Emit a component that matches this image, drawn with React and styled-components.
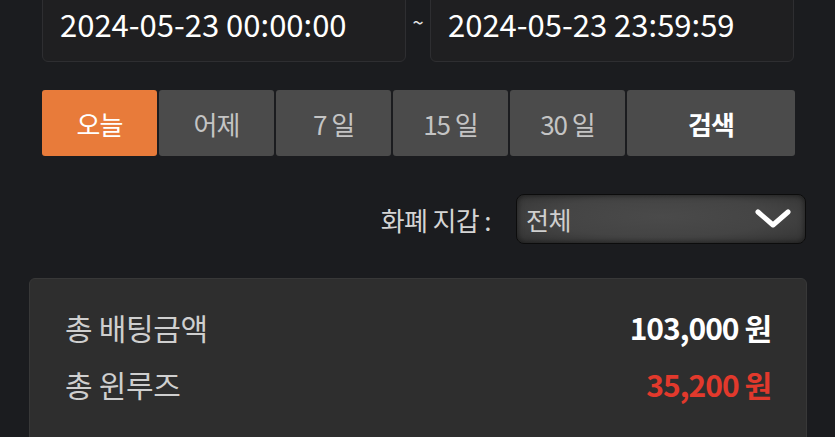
import React from "react";
import styled, { createGlobalStyle } from "styled-components";

const Global = createGlobalStyle`
  html, body { margin: 0; padding: 0; background: #1b1c1f; }
  body { font-family: "Noto Sans CJK KR", "Noto Sans", sans-serif; overflow: hidden; }
`;

const FONT = `"Noto Sans CJK KR", "Noto Sans", sans-serif`;

const Page = styled.div`
  width: 835px;
  height: 437px;
  overflow: hidden;
  background: #1b1c1f;
  font-family: ${FONT};
`;

const DateRow = styled.div`
  display: grid;
  grid-template-columns: 1fr 24px 1fr;
  margin: -12px 41px 0 42px;
  align-items: center;
`;

const DateBox = styled.div`
  height: 74px;
  box-sizing: border-box;
  background: #1f1f21;
  border: 1px solid #2e2e31;
  border-radius: 6px;
  display: flex;
  align-items: center;
  padding-left: 17px;
  padding-bottom: 3px;
  color: #ffffff;
  font-size: 31px;
  line-height: 1;
`;

const Tilde = styled.div`
  color: #e6e6e6;
  font-size: 20px;
  text-align: center;
  padding-bottom: 8px;
`;

const ButtonRow = styled.div`
  display: grid;
  grid-template-columns: repeat(5, 115px) 168px;
  gap: 2px;
  margin: 28px 0 0 42px;
`;

const RangeButton = styled.button`
  height: 66px;
  border: none;
  border-radius: 3px;
  background: ${(p) => (p.$active ? "#e87b3a" : "#4b4b4b")};
  color: ${(p) => (p.$active || p.$bold ? "#ffffff" : "#c4c4c4")};
  font-family: ${FONT};
  font-size: 26px;
  font-weight: ${(p) => (p.$bold ? 700 : 400)};
  letter-spacing: -1px;
  padding: 0;
`;

const FilterRow = styled.div`
  display: flex;
  justify-content: flex-end;
  align-items: center;
  gap: 25px;
  margin: 38px 29px 0 0;
`;

const FilterLabel = styled.span`
  color: #d4d4d4;
  font-size: 26px;
  letter-spacing: -0.6px;
`;

const Select = styled.div`
  width: 290px;
  height: 50px;
  box-sizing: border-box;
  border: 1px solid #0c0c0c;
  border-radius: 8px;
  background: radial-gradient(ellipse at 50% 45%, #4a4a4a 0%, #444 55%, #333 100%);
  box-shadow: inset 0 0 6px rgba(0, 0, 0, 0.6);
  display: flex;
  align-items: center;
  justify-content: space-between;
  padding: 0 14px 0 9px;
  color: #cfcfcf;
  font-size: 25px;
  letter-spacing: -0.5px;
`;

const Card = styled.div`
  margin: 34px 28px 0 29px;
  height: 180px;
  box-sizing: border-box;
  background: #2e2e2e;
  border: 1px solid #383838;
  border-radius: 6px;
  padding: 30px 35px 0 35px;
  display: flex;
  flex-direction: column;
  gap: 21px;
`;

const SumRow = styled.div`
  display: flex;
  justify-content: space-between;
  align-items: center;
  height: 36px;
`;

const SumLabel = styled.span`
  color: #cfcfcf;
  font-size: 30px;
  letter-spacing: -0.3px;
`;

const SumValue = styled.span`
  color: ${(p) => p.$color};
  font-size: 30px;
  font-weight: 700;
  letter-spacing: -1px;
`;

const Chevron = () => (
  <svg width="36" height="20" viewBox="0 0 36 20">
    <path d="M3 3 L18 16 L33 3" fill="none" stroke="#ffffff" strokeWidth="5" strokeLinecap="round" strokeLinejoin="round" />
  </svg>
);

export default function App() {
  const ranges = ["오늘", "어제", "7 일", "15 일", "30 일"];
  return (
    <Page>
      <Global />
      <DateRow>
        <DateBox>2024-05-23 00:00:00</DateBox>
        <Tilde>~</Tilde>
        <DateBox>2024-05-23 23:59:59</DateBox>
      </DateRow>
      <ButtonRow>
        {ranges.map((r, i) => (
          <RangeButton key={r} $active={i === 0}>{r}</RangeButton>
        ))}
        <RangeButton $bold>검색</RangeButton>
      </ButtonRow>
      <FilterRow>
        <FilterLabel>화폐 지갑 :</FilterLabel>
        <Select>
          <span>전체</span>
          <Chevron />
        </Select>
      </FilterRow>
      <Card>
        <SumRow>
          <SumLabel>총 배팅금액</SumLabel>
          <SumValue $color="#ffffff">103,000 원</SumValue>
        </SumRow>
        <SumRow>
          <SumLabel>총 윈루즈</SumLabel>
          <SumValue $color="#e2392c">35,200 원</SumValue>
        </SumRow>
      </Card>
    </Page>
  );
}
